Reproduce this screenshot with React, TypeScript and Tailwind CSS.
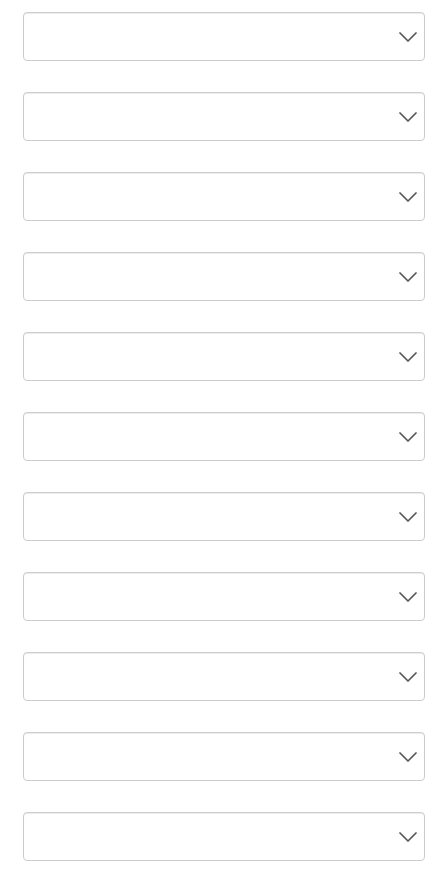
import React from "react";

function Chevron() {
  return (
    <svg width="18" height="10" viewBox="0 0 18 10" fill="none" className="shrink-0">
      <path d="M1 1 L9 9 L17 1" stroke="#555555" strokeWidth="1.7" strokeLinecap="round" strokeLinejoin="round" />
    </svg>
  );
}

export default function App() {
  const items = Array.from({ length: 11 });
  return (
    <div className="min-h-[896px] bg-white pt-[12px] pl-[23px] pr-[19px] flex flex-col gap-[31px]" style={{ fontFamily: "'Liberation Sans', Arial, sans-serif" }}>
      {items.map((_, i) => (
        <div
          key={i}
          className="h-[49px] w-full border border-[#cccccc] rounded-[4px] bg-white shadow-[inset_0_1px_1px_rgba(0,0,0,0.075)] flex items-center justify-end pr-[7px]"
        >
          <Chevron />
        </div>
      ))}
    </div>
  );
}
